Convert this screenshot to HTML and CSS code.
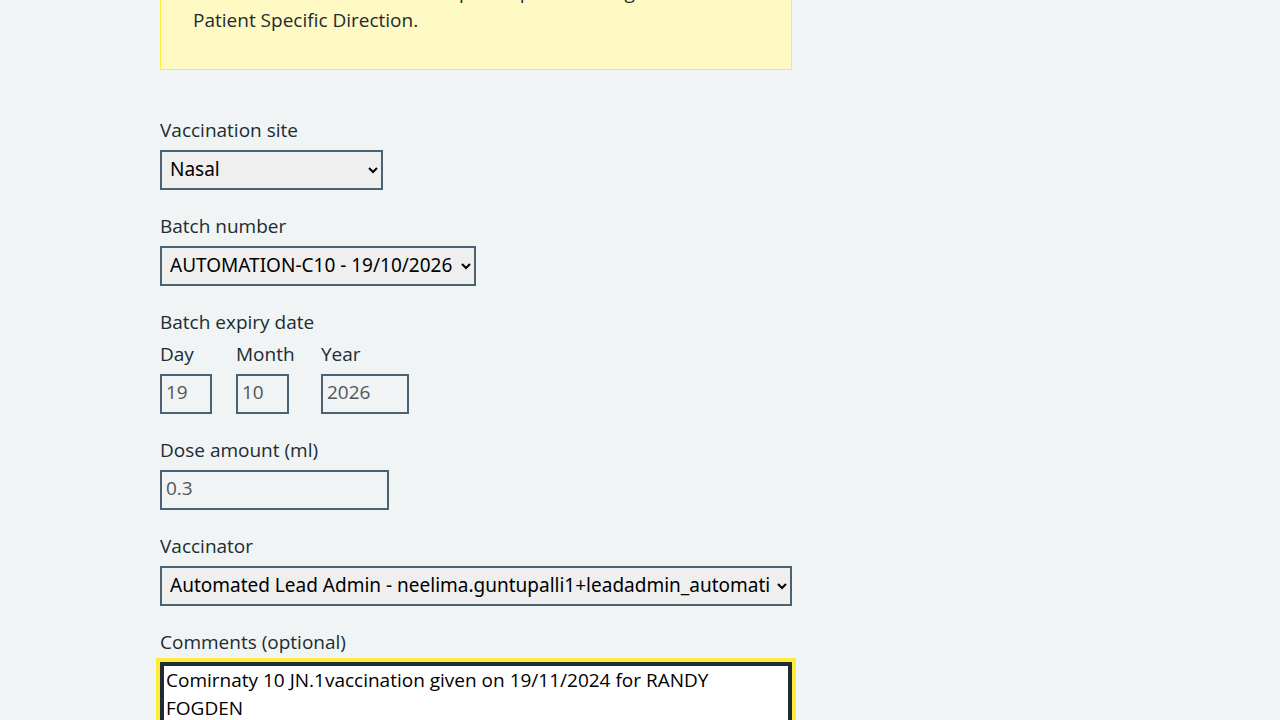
FILE: index.html
```html
<!DOCTYPE html>
<html lang="en">

<head>
    <meta charset="UTF-8">
    <meta name="viewport" content="width=device-width, initial-scale=1.0">
    <title>Record vaccination</title>
    <link rel="stylesheet" href="styles.css">
</head>

<body>
    <div class="width-container">
        <main class="column">
            <div class="warning-callout">
                <p>This vaccination needs a valid prescription or a signed<br>Patient Specific Direction.</p>
            </div>

            <form>
                <div class="form-group">
                    <label class="label" for="site">Vaccination site</label>
                    <select class="select select-site" id="site">
                        <option>Nasal</option>
                        <option>Left deltoid</option>
                        <option>Right deltoid</option>
                    </select>
                </div>

                <div class="form-group">
                    <label class="label" for="batch">Batch number</label>
                    <select class="select select-batch" id="batch">
                        <option>AUTOMATION-C10 - 19/10/2026</option>
                    </select>
                </div>

                <div class="form-group">
                    <fieldset class="fieldset">
                        <legend class="legend">Batch expiry date</legend>
                        <div class="date-input">
                            <div class="date-item">
                                <label class="label" for="expiry-day">Day</label>
                                <input class="input input-day" id="expiry-day" type="text" value="19" readonly>
                            </div>
                            <div class="date-item date-item-month">
                                <label class="label" for="expiry-month">Month</label>
                                <input class="input input-month" id="expiry-month" type="text" value="10" readonly>
                            </div>
                            <div class="date-item">
                                <label class="label" for="expiry-year">Year</label>
                                <input class="input input-year" id="expiry-year" type="text" value="2026" readonly>
                            </div>
                        </div>
                    </fieldset>
                </div>

                <div class="form-group">
                    <label class="label" for="dose">Dose amount (ml)</label>
                    <input class="input input-dose" id="dose" type="text" value="0.3" readonly>
                </div>

                <div class="form-group">
                    <label class="label" for="vaccinator">Vaccinator</label>
                    <select class="select select-full" id="vaccinator">
                        <option>Automated Lead Admin - neelima.guntupalli1+leadadmin_automation@nhs.net</option>
                    </select>
                </div>

                <div class="form-group">
                    <label class="label" for="comments">Comments (optional)</label>
                    <textarea class="textarea textarea-focus" id="comments" rows="5">Comirnaty 10 JN.1vaccination given on 19/11/2024 for RANDY FOGDEN</textarea>
                </div>
            </form>
        </main>
    </div>
</body>

</html>
```

FILE: styles.css
```css
* {
    box-sizing: border-box;
}

html,
body {
    overflow: hidden;
}

body {
    margin: 0;
    background-color: #f0f4f5;
    color: #212b32;
    font-family: "Open Sans", "Noto Sans", sans-serif;
    font-size: 19px;
    line-height: 28px;
}

.width-container {
    width: 960px;
    margin: 0 auto;
}

.column {
    width: 632px;
}

/* 黄色提示框, 页面已滚动, 只露出下半部分 */
.warning-callout {
    margin-top: -55px;
    margin-bottom: 48px;
    padding: 32px 32px 35px;
    background-color: #fff9c4;
    border: 1px solid #ffeb3b;
}

.warning-callout p {
    margin: 0;
}

.form-group {
    margin-bottom: 24px;
}

/* 文字比原字体偏低, 行高缩小 2px 往上提 */
.label,
.legend {
    display: block;
    margin-bottom: 8px;
    font-size: 19px;
    line-height: 24px;
}

.fieldset {
    margin: 0;
    padding: 0;
    border: 0;
    min-width: 0;
}

.legend {
    padding: 0;
}

.date-input {
    display: flex;
}

.date-item {
    margin-right: 24px;
}

.date-item-month {
    min-width: 61px;
}

.input {
    display: block;
    height: 40px;
    padding: 2px 4px 6px;
    border: 2px solid #4c6272;
    border-radius: 0;
    background-color: transparent;
    color: #545454;
    font-family: inherit;
    font-size: 19px;
    line-height: 28px;
}

.input-day {
    width: 52px;
}

.input-month {
    width: 53px;
}

.input-year {
    width: 88px;
}

.input-dose {
    width: 229px;
}

.select {
    display: block;
    height: 40px;
    padding: 0 4px 2px 4px;
    border: 2px solid #4c6272;
    border-radius: 0;
    background-color: #efefef;
    color: #000;
    font-family: "Noto Sans", "Open Sans", sans-serif;
    font-size: 19px;
}

.select-site {
    width: 223px;
}

.select-batch {
    width: 316px;
}

.select-full {
    width: 100%;
}

.textarea {
    display: block;
    width: 100%;
    padding: 2px 4px 4px;
    border: 2px solid #4c6272;
    border-radius: 0;
    background-color: #fff;
    color: #000;
    font-family: inherit;
    font-size: 19px;
    line-height: 28px;
    resize: vertical;
}

/* 获得焦点时的样式 */
.textarea-focus {
    border-color: #212b32;
    box-shadow: inset 0 0 0 2px #212b32;
    outline: 4px solid #ffeb3b;
    outline-offset: 0;
}
```
